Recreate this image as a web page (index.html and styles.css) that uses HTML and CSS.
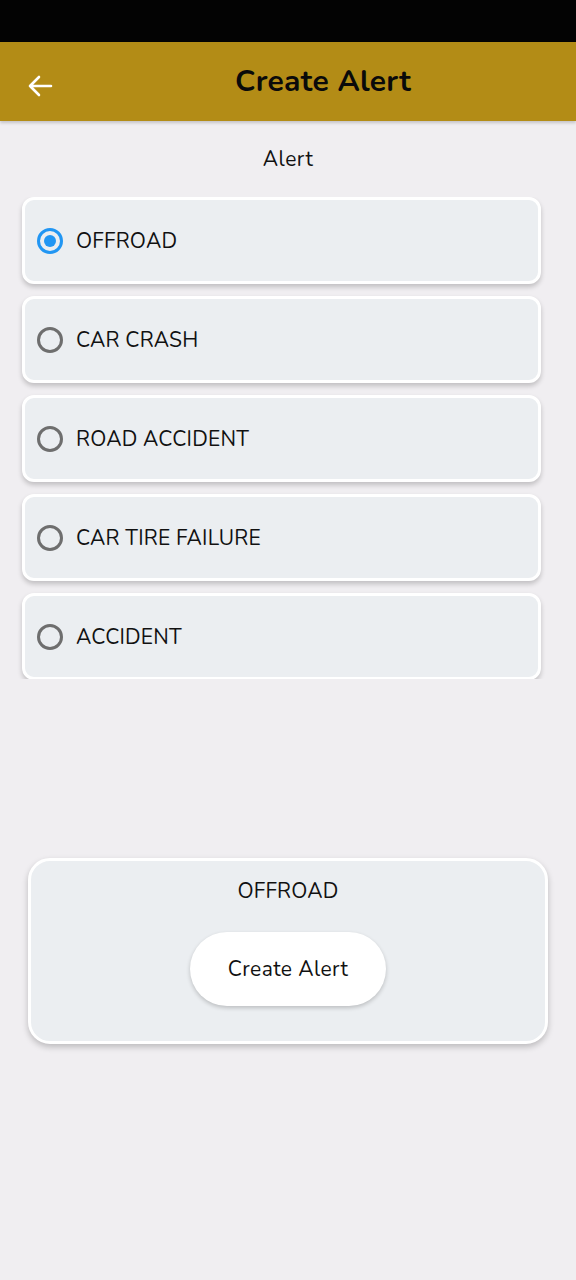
FILE: index.html
```html
<!DOCTYPE html>
<html>
<head>
<meta charset="utf-8">
<link rel="stylesheet" href="styles.css">
</head>
<body>
<div class="status"></div>
<header class="appbar">
  <svg class="back" width="26" height="24" viewBox="0 0 26 24"><path d="M24 12H3M12 3L3 12l9 9" fill="none" stroke="#fff" stroke-width="2.6" stroke-linecap="round" stroke-linejoin="round"/></svg>
  <h1 class="title">Create Alert</h1>
</header>
<main class="content">
  <div class="label">Alert</div>
  <div class="list">
    <div class="card"><span class="radio on"></span><span class="opt">OFFROAD</span></div>
    <div class="card"><span class="radio"></span><span class="opt">CAR CRASH</span></div>
    <div class="card"><span class="radio"></span><span class="opt">ROAD ACCIDENT</span></div>
    <div class="card"><span class="radio"></span><span class="opt">CAR TIRE FAILURE</span></div>
    <div class="card"><span class="radio"></span><span class="opt">ACCIDENT</span></div>
  </div>
  <section class="summary">
    <div class="sel">OFFROAD</div>
    <button class="btn">Create Alert</button>
  </section>
</main>
</body>
</html>
```
FILE: styles.css
```css
* { box-sizing: border-box; }
html, body { margin: 0; padding: 0; }
body {
  width: 576px;
  height: 1280px;
  background: #f0eef1;
  font-family: "Nunito", "Lato", "Noto Sans", sans-serif;
  color: #111;
  overflow: hidden;
}
.status { height: 42px; background: #030303; }
.appbar {
  height: 79px;
  background: #b38c16;
  display: flex;
  align-items: center;
  position: relative;
  box-shadow: 0 2px 3px rgba(0,0,0,0.18);
}
.back { position: absolute; left: 27px; top: 32px; }
.title {
  margin: 0;
  flex: 1;
  text-align: center;
  padding-left: 70px;
  font-size: 30px;
  font-weight: 700;
  color: #0a0a0a;
  letter-spacing: 0.3px;
}
.content { display: flex; flex-direction: column; }
.label {
  text-align: center;
  font-size: 21px;
  letter-spacing: 0.5px;
  margin-top: 24px;
  height: 28px;
  line-height: 28px;
}
.list {
  margin-top: 24px;
  height: 482px;
  overflow: hidden;
  padding: 0 35px 0 22px;
  display: flex;
  flex-direction: column;
  gap: 12px;
}
.card {
  flex: none;
  height: 87px;
  background: #ebeef1;
  border: 3px solid #fff;
  border-radius: 12px;
  box-shadow: 0 3px 5px rgba(0,0,0,0.2);
  display: flex;
  align-items: center;
  padding-left: 12px;
}
.radio {
  width: 26px;
  height: 26px;
  border-radius: 50%;
  border: 3px solid #6e6e6e;
  margin-right: 13px;
  position: relative;
}
.radio.on { border-color: #2196f3; }
.radio.on::after {
  content: "";
  position: absolute;
  left: 4px; top: 4px;
  width: 12px; height: 12px;
  border-radius: 50%;
  background: #2196f3;
}
.opt { font-size: 21px; letter-spacing: 0.2px; }
.summary {
  margin: 179px 28px 0 28px;
  height: 186px;
  background: #ebeef1;
  border: 3px solid #fff;
  border-radius: 22px;
  box-shadow: 0 3px 6px rgba(0,0,0,0.22);
  display: flex;
  flex-direction: column;
  align-items: center;
}
.sel { font-size: 21px; margin-top: 16px; line-height: 28px; letter-spacing: 0.2px; }
.btn {
  margin-top: 27px;
  width: 196px;
  height: 74px;
  border: none;
  border-radius: 37px;
  background: #fff;
  box-shadow: 0 2px 4px rgba(0,0,0,0.2);
  font-family: inherit;
  font-size: 21px;
  letter-spacing: 0.4px;
  color: #111;
}
```
